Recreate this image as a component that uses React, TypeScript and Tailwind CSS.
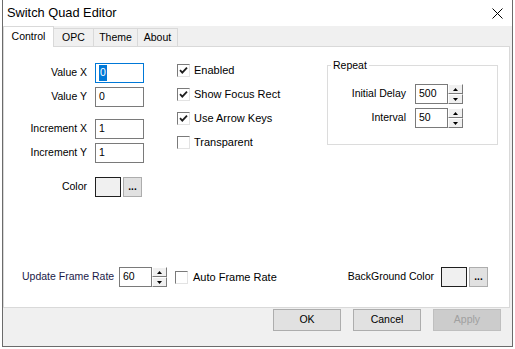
import React from "react";

function Check({ checked }: { checked?: boolean }) {
  return (
    <div className="w-[13px] h-[13px] shrink-0 border border-t-[#7a7a7a] border-l-[#7a7a7a] border-b-[#e3e3e3] border-r-[#e3e3e3] bg-white flex items-center justify-center">
      {checked && (
        <svg width="9" height="9" viewBox="0 0 9 9">
          <path d="M1 4.2 L3.3 6.6 L8 1.6" stroke="#1e1e1e" strokeWidth="1.8" fill="none" />
        </svg>
      )}
    </div>
  );
}

function Spin() {
  const btn =
    "flex-1 flex items-center justify-center bg-[#f0f0f0] border border-t-white border-l-white border-b-[#7a7a7a] border-r-[#7a7a7a]";
  return (
    <div className="flex flex-col w-[15px] h-[20px] shrink-0">
      <div className={btn}>
        <svg width="5" height="3" viewBox="0 0 5 3">
          <path d="M2.5 0 L5 3 L0 3 Z" fill="#000" />
        </svg>
      </div>
      <div className={btn}>
        <svg width="5" height="3" viewBox="0 0 5 3">
          <path d="M0 0 L5 0 L2.5 3 Z" fill="#000" />
        </svg>
      </div>
    </div>
  );
}

function Field({ value, focused }: { value: string; focused?: boolean }) {
  return (
    <div
      className={`w-[49px] h-[20px] bg-white border flex items-center pl-[3px] text-[10.5px] ${
        focused ? "border-[#0078d7]" : "border-[#7a7a7a]"
      }`}
    >
      {focused ? <span className="bg-[#0078d7] text-white px-px">{value}</span> : value}
    </div>
  );
}

function SpinField({ value }: { value: string }) {
  return (
    <div className="flex items-center">
      <div className="w-[33px] h-[20px] bg-white border border-[#7a7a7a] flex items-center pl-[3px] text-[10.5px]">
        {value}
      </div>
      <Spin />
    </div>
  );
}

function ColorPick() {
  return (
    <div className="flex items-center gap-[2px]">
      <div className="w-[26px] h-[20px] bg-[#f0f0f0] border border-[#1f1f1f]" />
      <div className="w-[19px] h-[20px] bg-[#e1e1e1] border border-[#adadad] flex items-end justify-center pb-[4px] text-[10px] font-bold leading-none">
        ...
      </div>
    </div>
  );
}

export default function App() {
  const leftRows = [
    { label: "Value X", value: "0", focused: true, mt: "" },
    { label: "Value Y", value: "0", mt: "mt-[4px]" },
    { label: "Increment X", value: "1", mt: "mt-[12px]" },
    { label: "Increment Y", value: "1", mt: "mt-[4px]" },
  ];
  const checks = [
    { label: "Enabled", on: true },
    { label: "Show Focus Rect", on: true },
    { label: "Use Arrow Keys", on: true },
    { label: "Transparent", on: false },
  ];

  return (
    <div className="w-[515px] h-[349px] bg-white text-black font-['Liberation_Sans',Arial,sans-serif]">
      <div className="ml-[2px] w-[511px] h-[347px] border-l border-r border-b border-[#6b6b6b] flex flex-col">
        {/* title bar */}
        <div className="h-[26px] shrink-0 bg-white flex items-center justify-between pl-[4px] pr-[9px]">
          <span className="text-[12.8px] text-[#000]">Switch Quad Editor</span>
          <svg width="11" height="11" viewBox="0 0 11 11">
            <path d="M0.5 0.5 L10.5 10.5 M10.5 0.5 L0.5 10.5" stroke="#000" strokeWidth="1" />
          </svg>
        </div>

        <div className="flex-1 bg-[#f0f0f0] flex flex-col">
          {/* tabs */}
          <div className="h-[20px] flex items-end text-[10.5px]">
            <div className="relative z-10 -mb-px w-[51px] h-[21px] bg-white border-l border-t border-r border-[#d9d9d9] flex items-center justify-center pb-[1px]">
              Control
            </div>
            <div className="w-[40px] h-[18px] border-t border-r border-[#d9d9d9] flex items-center justify-center">
              OPC
            </div>
            <div className="w-[44px] h-[18px] border-t border-r border-[#d9d9d9] flex items-center justify-center">
              Theme
            </div>
            <div className="w-[40px] h-[18px] border-t border-r border-[#d9d9d9] flex items-center justify-center">
              About
            </div>
          </div>

          {/* page */}
          <div className="w-[507px] h-[262px] bg-white border border-[#d9d9d9] flex flex-col">
            <div className="flex items-start">
              {/* value fields */}
              <div className="mt-[16px] flex flex-col text-[10.5px]">
                {leftRows.map((r) => (
                  <div key={r.label} className={`flex items-center gap-[8px] ${r.mt}`}>
                    <span className="w-[83px] text-right">{r.label}</span>
                    <Field value={r.value} focused={r.focused} />
                  </div>
                ))}
                <div className="flex items-center gap-[8px] mt-[14px]">
                  <span className="w-[83px] text-right pl-[2px]">Color</span>
                  <ColorPick />
                </div>
              </div>

              {/* check boxes */}
              <div className="ml-[33px] mt-[11px] w-[150px] flex flex-col text-[11px]">
                {checks.map((c) => (
                  <div key={c.label} className="h-[24px] flex items-center gap-[4px]">
                    <Check checked={c.on} />
                    <span>{c.label}</span>
                  </div>
                ))}
              </div>

              {/* repeat group */}
              <fieldset className="mt-[12px] w-[171px] h-[86px] border border-[#dcdcdc] text-[10.5px]">
                <legend className="ml-[3px] px-[2px] leading-[13px]">Repeat</legend>
                <div className="mt-[12px] flex flex-col gap-[4px]">
                  <div className="flex items-center gap-[9px]">
                    <span className="w-[78px] text-right">Initial Delay</span>
                    <SpinField value="500" />
                  </div>
                  <div className="flex items-center gap-[9px]">
                    <span className="w-[78px] text-right">Interval</span>
                    <SpinField value="50" />
                  </div>
                </div>
              </fieldset>
            </div>

            {/* bottom row */}
            <div className="mt-auto pb-[20px] pl-[18px] pr-[21px] flex items-center text-[10.5px]">
              <span className="w-[97px] text-[#1a1a48]">Update Frame Rate</span>
              <SpinField value="60" />
              <div className="ml-[8px] flex items-center gap-[5px] text-[11px]">
                <Check />
                <span>Auto Frame Rate</span>
              </div>
              <div className="ml-auto flex items-center gap-[7px]">
                <span>BackGround Color</span>
                <ColorPick />
              </div>
            </div>
          </div>

          {/* dialog buttons */}
          <div className="mt-[1px] pr-[11px] flex justify-end gap-[12px] text-[10.5px]">
            <div className="w-[68px] h-[22px] bg-[#e1e1e1] border border-[#adadad] flex items-center justify-center">
              OK
            </div>
            <div className="w-[68px] h-[22px] bg-[#e1e1e1] border border-[#adadad] flex items-center justify-center">
              Cancel
            </div>
            <div className="w-[68px] h-[22px] bg-[#cccccc] border border-[#bfbfbf] text-[#a0a0a0] flex items-center justify-center">
              Apply
            </div>
          </div>
        </div>
      </div>
    </div>
  );
}
